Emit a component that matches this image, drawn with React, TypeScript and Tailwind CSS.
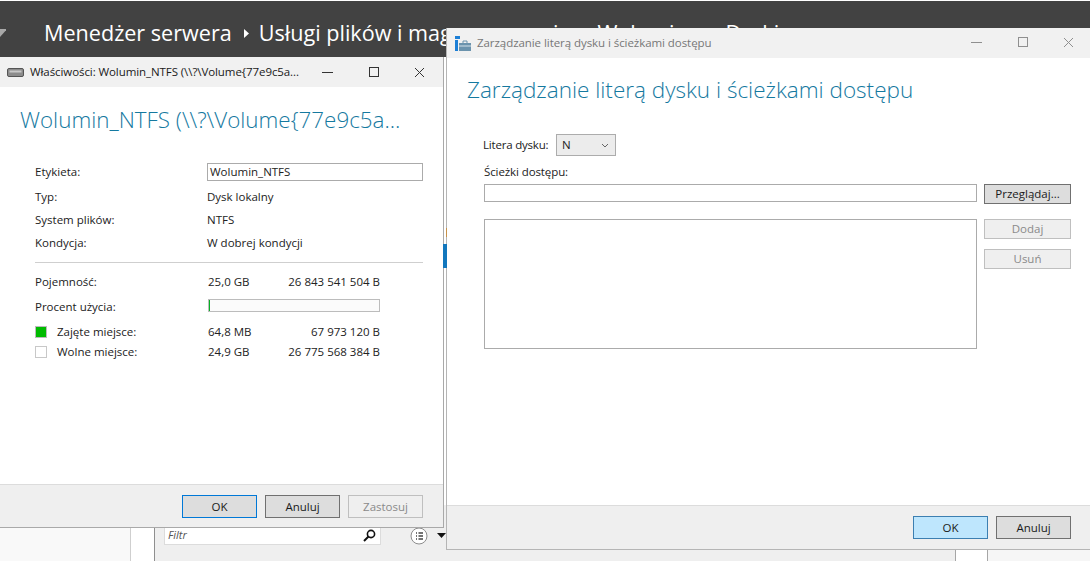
import type { ReactNode } from 'react';

const font = "font-['Open_Sans','Noto_Sans',sans-serif]";

function Btn({
  children,
  variant = 'normal',
  className = '',
}: {
  children: ReactNode;
  variant?: 'normal' | 'focus' | 'hot' | 'off';
  className?: string;
}) {
  const look = {
    normal: 'border-[#707070] bg-[#dddddd] text-[#1a1a1a]',
    focus: 'border-[#0078d7] bg-[#dddddd] text-[#1a1a1a]',
    hot: 'border-[#3c7fb1] bg-[#bee6fd] text-[#1a1a1a]',
    off: 'border-[#bfbfbf] bg-[#efefef] text-[#8a8a8a]',
  }[variant];
  return <div className={`flex items-center justify-center border text-[11.5px] ${look} ${className}`}>{children}</div>;
}

function Chrome({ dim = false }: { dim?: boolean }) {
  const stroke = dim ? '#8f8f8f' : '#333333';
  return (
    <div className="flex items-center gap-[35px]">
      <svg width="11" height="11" viewBox="0 0 11 11"><path d="M0 5.5H11" stroke={stroke} /></svg>
      <svg width="11" height="11" viewBox="0 0 11 11"><rect x="1.5" y="0.5" width="9" height="9" fill="none" stroke={stroke} /></svg>
      <svg width="11" height="11" viewBox="0 0 11 11"><path d="M1 1L10 10M10 1L1 10" stroke={stroke} /></svg>
    </div>
  );
}

function DriveIcon() {
  return (
    <svg width="18" height="11" viewBox="0 0 18 11">
      <rect x="0.5" y="1.5" width="16" height="8" rx="1.5" fill="#8c8c8c" stroke="#555555" />
      <rect x="2.5" y="3.5" width="12" height="2" fill="#c8c8c8" />
    </svg>
  );
}

function ToolIcon() {
  return (
    <svg width="17" height="17" viewBox="0 0 17 17">
      <rect x="0" y="1" width="5" height="3" fill="#1c7fd6" />
      <rect x="0" y="5" width="3" height="11" fill="#1c7fd6" />
      <rect x="4" y="8" width="12" height="8" fill="#6b93ad" />
      <path d="M8 8V6H12V8" fill="none" stroke="#6b93ad" />
      <path d="M4 11H16" stroke="#d5e2ea" />
    </svg>
  );
}

function Row({ label, value }: { label: string; value: string }) {
  return (
    <div className="flex h-[23px] items-center">
      <span className="w-[172px]">{label}</span>
      <span>{value}</span>
    </div>
  );
}

function SizeRow({ label, size, bytes, swatch }: { label: ReactNode; size: string; bytes: string; swatch?: ReactNode }) {
  return (
    <div className="flex h-[20px] items-center">
      <span className="flex w-[173px] items-center">
        {swatch}
        {label}
      </span>
      <span className="w-[70px]">{size}</span>
      <span className="w-[102px] text-right">{bytes}</span>
    </div>
  );
}

function PropertiesWindow() {
  return (
    <div className="absolute left-0 top-[57px] flex h-[471px] w-[444px] flex-col border-r border-b border-[#a9a9a9] bg-white text-[11.5px] text-[#222222]">
      <div className="flex h-[30px] shrink-0 items-center justify-between bg-[#f1f1f1] pl-[7px] pr-[18px]">
        <div className="flex items-center gap-[5px]">
          <DriveIcon />
          <span className="tracking-[-0.08px] text-[#1a1a1a]">Właściwości: Wolumin_NTFS (\\?\Volume{'{'}77e9c5a...</span>
        </div>
        <Chrome />
      </div>
      <div className="flex-1 pl-[35px] pr-[20px]">
        <div className="ml-[-15px] mt-[17px] h-[32px] text-[22.4px] font-light leading-[32px] text-[#15799f]">
          Wolumin_NTFS (\\?\Volume{'{'}77e9c5a...
        </div>
        <div className="mt-[26px] flex h-[19px] items-center">
          <span className="w-[172px]">Etykieta:</span>
          <div className="flex h-[18px] flex-1 items-center border border-[#ababab] pl-[2px]">Wolumin_NTFS</div>
        </div>
        <div className="mt-[4px]">
          <Row label="Typ:" value="Dysk lokalny" />
          <Row label="System plików:" value="NTFS" />
          <Row label="Kondycja:" value="W dobrej kondycji" />
        </div>
        <div className="mt-[8px] border-t border-[#cfcfcf]" />
        <div className="mt-[9px]">
          <SizeRow label="Pojemność:" size="25,0 GB" bytes="26 843 541 504 B" />
          <div className="mt-[5px] flex h-[20px] items-start">
            <span className="flex h-[20px] w-[173px] items-center">Procent użycia:</span>
            <div className="mt-[2px] h-[13px] w-[172px] border border-[#bcbcbc] bg-[#fbfbfb]">
              <div className="h-full w-px bg-[#06b025]" />
            </div>
          </div>
          <div className="mt-[5px]">
            <SizeRow
              label="Zajęte miejsce:"
              size="64,8 MB"
              bytes="67 973 120 B"
              swatch={<span className="mr-[10px] h-[12px] w-[12px] shrink-0 border border-[#bcbcbc] bg-[#00bb00]" />}
            />
            <SizeRow
              label="Wolne miejsce:"
              size="24,9 GB"
              bytes="26 775 568 384 B"
              swatch={<span className="mr-[10px] h-[12px] w-[12px] shrink-0 border border-[#c8c8c8] bg-white" />}
            />
          </div>
        </div>
      </div>
      <div className="flex h-[43px] shrink-0 items-center justify-end gap-[8px] border-t border-[#dcdcdc] bg-[#efefef] pt-px pr-[20px]">
        <Btn variant="focus" className="h-[23px] w-[75px]">OK</Btn>
        <Btn className="h-[23px] w-[75px]">Anuluj</Btn>
        <Btn variant="off" className="h-[23px] w-[75px]">Zastosuj</Btn>
      </div>
    </div>
  );
}

function DriveLetterWindow() {
  return (
    <div className="absolute left-[446px] top-[28px] flex h-[522px] w-[644px] flex-col border-b border-l border-[#b5b5b5] bg-white text-[11.5px] text-[#222222]">
      <div className="flex h-[30px] shrink-0 items-center justify-between bg-[#f1f1f1] pb-[2px] pl-[8px] pr-[16px]">
        <div className="mt-[2px] flex items-center gap-[5px]">
          <ToolIcon />
          <span className="tracking-[-0.06px] text-[#777777]">Zarządzanie literą dysku i ścieżkami dostępu</span>
        </div>
        <Chrome dim />
      </div>
      <div className="flex-1 pl-[37px] pr-[19px]">
        <div className="ml-[-17px] mt-[16px] h-[32px] text-[22.5px] font-light leading-[32px] text-[#15799f]">
          Zarządzanie literą dysku i ścieżkami dostępu
        </div>
        <div className="mt-[28px] flex items-center">
          <span className="ml-[-1px] w-[73px] tracking-[-0.2px]">Litera dysku:</span>
          <div className="flex h-[22px] w-[60px] items-center justify-between border border-[#acacac] bg-[#ececec] pl-[5px] pr-[6px]">
            <span>N</span>
            <svg width="8" height="5" viewBox="0 0 8 5"><path d="M1 1L4 4L7 1" fill="none" stroke="#666666" /></svg>
          </div>
        </div>
        <div className="mt-[6px] h-[20px] leading-[20px] tracking-[-0.1px]">Ścieżki dostępu:</div>
        <div className="mt-[2px] flex items-start gap-[7px]">
          <div className="h-[18px] w-[493px] border border-[#ababab]" />
          <Btn className="h-[20px] w-[87px]">Przeglądaj...</Btn>
        </div>
        <div className="mt-[15px] flex items-start gap-[7px]">
          <div className="h-[130px] w-[493px] border border-[#ababab]" />
          <div className="flex flex-col gap-[10px]">
            <Btn variant="off" className="h-[20px] w-[87px]">Dodaj</Btn>
            <Btn variant="off" className="h-[20px] w-[87px]">Usuń</Btn>
          </div>
        </div>
      </div>
      <div className="flex h-[44px] shrink-0 items-center justify-end gap-[8px] border-t border-[#dcdcdc] bg-[#efefef] pr-[19px]">
        <Btn variant="hot" className="h-[23px] w-[75px]">OK</Btn>
        <Btn className="h-[23px] w-[75px]">Anuluj</Btn>
      </div>
    </div>
  );
}

function Arrow() {
  return (
    <svg className="ml-[12px] mr-[9px]" width="6" height="9" viewBox="0 0 6 9"><path d="M0 0L5 4.5L0 9Z" fill="#ffffff" /></svg>
  );
}

function Backdrop() {
  return (
    <div className="flex h-[561px] w-[1090px] flex-col bg-white">
      <div className="mt-px flex h-[56px] shrink-0 items-center bg-[#424242] pt-[9px] text-[21.6px] text-white">
        <svg className="mr-[38px] mt-[-1px]" width="6" height="9" viewBox="0 0 6 9"><path d="M0 0H7L0 8Z" fill="#a8a8a8" /></svg>
        <span>Menedżer serwera</span>
        <Arrow />
        <span>Usługi plików i magazynowania</span>
        <Arrow />
        <span>Woluminy</span>
        <Arrow />
        <span>Dyski</span>
      </div>
      <div className="flex flex-1">
        <div className="w-[131px] border-r border-[#cfcfcf] bg-[#f9f9f9]" />
        <div className="w-[24px] border-r border-[#8f8f8f] bg-white" />
        <div className="flex w-[291px] flex-col justify-end bg-[#efefef] pb-[16px] pl-[9px]">
          <div className="flex items-center">
            <div className="flex h-[19px] w-[217px] items-center justify-between border border-[#dcdcdc] bg-white pl-[3px] pr-[4px] text-[11px] italic text-[#555555]">
              <span>Filtr</span>
              <svg width="13" height="13" viewBox="0 0 13 13">
                <circle cx="8" cy="5" r="3.6" fill="none" stroke="#111111" strokeWidth="1.6" />
                <path d="M5.5 7.5L1 12" stroke="#111111" strokeWidth="2" />
              </svg>
            </div>
            <svg className="ml-[29px]" width="18" height="18" viewBox="0 0 18 18">
              <circle cx="9" cy="9" r="8" fill="white" stroke="#8c8c8c" />
              <path d="M6 6H7M6 9H7M6 12H7M8.5 6H13M8.5 9H13M8.5 12H13" stroke="#444444" strokeWidth="1.4" />
            </svg>
            <svg className="ml-[9px]" width="9" height="5" viewBox="0 0 9 5"><path d="M0 0H9L4.5 5Z" fill="#111111" /></svg>
          </div>
        </div>
        <div className="w-[509px] bg-[#efefef]" />
        <div className="w-[33px] border-x border-[#a6a6a6] bg-white" />
        <div className="flex-1 bg-[#f6f6f6]" />
      </div>
    </div>
  );
}

export default function App() {
  return (
    <div className={`relative h-[561px] w-[1090px] overflow-hidden ${font}`}>
      <Backdrop />
      <div className="absolute left-[444px] top-[57px] h-[448px] w-[2px] bg-white" />
      <PropertiesWindow />
      <DriveLetterWindow />
      {/* sliver of the console visible in the gap */}
      <div className="absolute left-[446px] top-[228px] h-[9px] w-px bg-[#c8924a]" />
      <div className="absolute left-[443px] top-[244px] h-[24px] w-[4px] bg-[#1277bd]" />
    </div>
  );
}
